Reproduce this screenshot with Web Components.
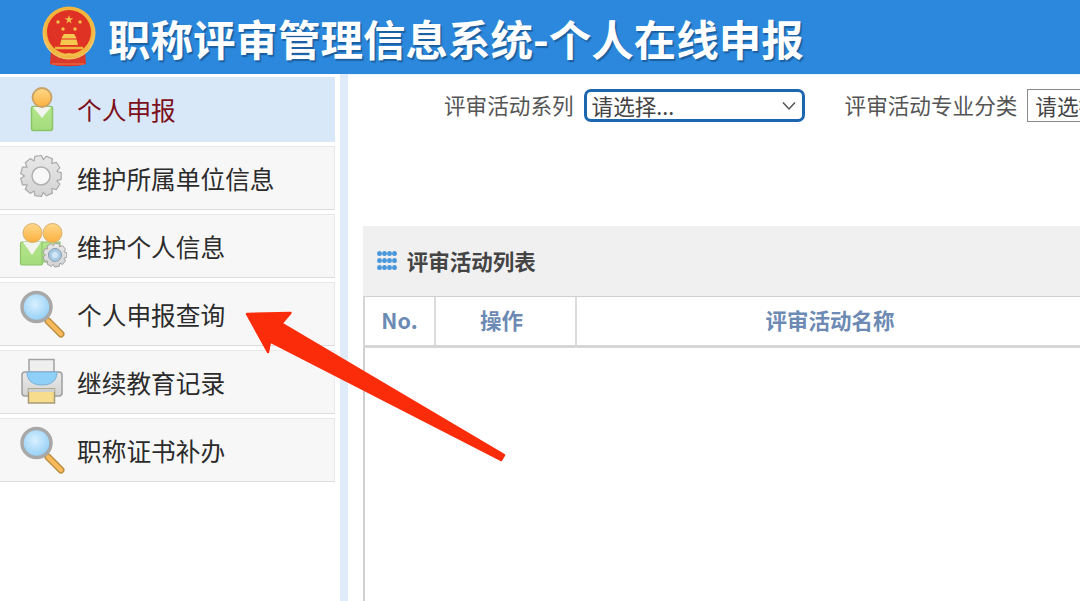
<!DOCTYPE html>
<html lang="zh">
<head>
<meta charset="utf-8">
<title>职称评审管理信息系统</title>
<style>
  html, body { margin: 0; height: 100%; background: #fff; overflow: hidden; }
  body {
    display: flex;
    flex-direction: column;
    height: 601px;
    font-family: "Noto Sans CJK SC", "Liberation Sans", sans-serif;
  }
  .page { display: flex; flex: 1; min-height: 0; }
</style>
</head>
<body>
  <app-header>职称评审管理信息系统-个人在线申报</app-header>
  <div class="page">
    <side-nav>
      <nav-item icon="person" active>个人申报</nav-item>
      <nav-item icon="gear">维护所属单位信息</nav-item>
      <nav-item icon="people">维护个人信息</nav-item>
      <nav-item icon="search">个人申报查询</nav-item>
      <nav-item icon="printer">继续教育记录</nav-item>
      <nav-item icon="search">职称证书补办</nav-item>
    </side-nav>
    <main-area>
      <filter-bar>
        <filter-field label="评审活动系列" focused>请选择...</filter-field>
        <filter-field label="评审活动专业分类">请选择...</filter-field>
      </filter-bar>
      <activity-panel title-text="评审活动列表"></activity-panel>
    </main-area>
  </div>
  <red-arrow></red-arrow>

<script>
// gear outline, centre cx/cy, used by two of the nav icons
function gearPath(cx, cy, outer, inner, teeth) {
  const pts = [];
  const step = Math.PI * 2 / teeth;
  for (let i = 0; i < teeth; i++) {
    const a = i * step;
    const radii = [[inner, -0.5], [outer, -0.28], [outer, 0.28], [inner, 0.5]];
    radii.forEach(([r, k]) => {
      const t = a + k * step;
      pts.push((cx + r * Math.cos(t)).toFixed(1) + ' ' + (cy + r * Math.sin(t)).toFixed(1));
    });
  }
  return 'M' + pts.join('L') + 'Z';
}

const sharedDefs = `
  <defs>
    <linearGradient id="head" x1="0" y1="0" x2="0" y2="1">
      <stop offset="0" stop-color="#ffd98a"/><stop offset="1" stop-color="#fbb03f"/>
    </linearGradient>
    <linearGradient id="body" x1="0" y1="0" x2="0" y2="1">
      <stop offset="0" stop-color="#b4e58c"/><stop offset="1" stop-color="#a4dc7c"/>
    </linearGradient>
    <linearGradient id="steel" x1="0" y1="0" x2="0" y2="1">
      <stop offset="0" stop-color="#e8e8e8"/><stop offset="1" stop-color="#d4d4d4"/>
    </linearGradient>
    <radialGradient id="glass" cx=".45" cy=".4" r=".65">
      <stop offset="0" stop-color="#d8f0ff"/><stop offset="1" stop-color="#8ccbf5"/>
    </radialGradient>
  </defs>`;

// all icons are drawn in a 50x56 box
const icons = {
  person: `
    <rect x="14.500" y="24.500" width="21" height="24" rx="2" fill="url(#body)" stroke="#8cc46a" stroke-width="1.500"/>
    <path d="M16 25h18l-9 11z" fill="#f2f5ee"/>
    <circle cx="25" cy="15.500" r="9.500" fill="url(#head)" stroke="#c9a265" stroke-width="1.800"/>`,
  gear: `
    <path d="${gearPath(24, 26, 20.500, 16.500, 11)}" fill="url(#steel)" stroke="#a9a9a9" stroke-width="1.200" stroke-linejoin="round"/>
    <circle cx="24" cy="26" r="9" fill="#f8f8f8" stroke="#b0b0b0" stroke-width="1.500"/>`,
  people: `
    <rect x="3.500" y="24" width="22" height="23" rx="1.500" fill="url(#body)" stroke="#8cc46a" stroke-width="1.200"/>
    <path d="M6 24h18l-9 13z" fill="#f2f5ee"/>
    <rect x="25" y="24" width="18" height="20" fill="url(#body)" stroke="#8cc46a" stroke-width="1"/>
    <circle cx="15.500" cy="15" r="9.500" fill="url(#head)" stroke="#d9b070" stroke-width="1"/>
    <circle cx="35.500" cy="15" r="9.500" fill="url(#head)" stroke="#d9b070" stroke-width="1"/>
    <path d="${gearPath(38, 37, 12, 9.500, 9)}" fill="url(#steel)" stroke="#a2a2a2" stroke-width="1" stroke-linejoin="round"/>
    <circle cx="38" cy="37" r="6.500" fill="#a9cbe6" stroke="#8b9bab" stroke-width="1"/>
    <circle cx="38" cy="37" r="3" fill="#d5e6f3"/>`,
  search: `
    <path d="M31 35l13 13" stroke="#b98a3c" stroke-width="7" stroke-linecap="round"/>
    <path d="M31 35l13 13" stroke="#f6b95c" stroke-width="4.500" stroke-linecap="round"/>
    <circle cx="19.500" cy="21" r="14.500" fill="url(#glass)" stroke="#a8a8a8" stroke-width="3.500"/>`,
  printer: `
    <path d="M12 5.500h25v16H12z" fill="#efefef" stroke="#a3a3a3" stroke-width="1.500"/>
    <rect x="5" y="18" width="40" height="24" rx="3" fill="url(#steel)" stroke="#9f9f9f" stroke-width="1.500"/>
    <path d="M10 18h30c0 9-6 13-15 13S10 27 10 18z" fill="#8fd0f8" stroke="#7ab1d6" stroke-width="1"/>
    <rect x="11.500" y="35" width="26" height="14" fill="#f7dc8e" stroke="#a69a76" stroke-width="1.500"/>
    <path d="M11.500 35h26v3h-26z" fill="#d0d0d0"/>`
};

class AppHeader extends HTMLElement {
  constructor() {
    super();
    this.attachShadow({ mode: 'open' });
    this.shadowRoot.innerHTML = `
      <style>
        :host {
          display: flex;
          align-items: center;
          flex: none;
          height: 74px;
          padding-left: 40px;
          background: #2b88dc;
          overflow: hidden;
        }
        svg { flex: none; width: 56px; height: 62px; margin-right: 12px; }
        .title {
          padding-top: 3px;
          color: #fff;
          font-size: 42.500px;
          font-weight: 700;
          line-height: 1;
          white-space: nowrap;
          text-shadow: 1.500px 2px 1px #1c5f9f;
        }
      </style>
      <svg viewBox="0 0 56 62">
        <defs>
          <radialGradient id="ring" cx=".5" cy=".45" r=".55">
            <stop offset=".8" stop-color="#f3b53c"/><stop offset="1" stop-color="#f6cf80"/>
          </radialGradient>
        </defs>
        <path d="M11 44h34l1 14c-6 3-30 3-36 0z" fill="#d8392a"/>
        <circle cx="29" cy="27" r="26.500" fill="url(#ring)"/>
        <circle cx="29" cy="26" r="22" fill="#df3224"/>
        <path d="M29 9l1 3.300h3.400l-2.800 2 1 3.300-2.600-2-2.600 2 1-3.300-2.800-2h3.400z" fill="#f3c04a"/>
        <circle cx="18" cy="16" r="1.700" fill="#f3c04a"/>
        <circle cx="23" cy="23" r="1.700" fill="#f3c04a"/>
        <circle cx="35" cy="23" r="1.700" fill="#f3c04a"/>
        <circle cx="40" cy="16" r="1.700" fill="#f3c04a"/>
        <path d="M22 31l2-3h10l2 3 2 8H20z" fill="#f5c94f"/>
        <path d="M20 33h18" stroke="#df3224" stroke-width="1"/>
        <path d="M10 41c5 7 11 10 19 10s14-3 19-10" fill="none" stroke="#efb63e" stroke-width="3.500"/>
        <path d="M15 42h28" stroke="#efb63e" stroke-width="2.500"/>
        <path d="M15 47c4 3 9 3 14 1 5 2 10 2 14-1" fill="none" stroke="#f0bd4a" stroke-width="2"/>
        <path d="M12 58h32" stroke="#e8663c" stroke-width="1.500"/>
      </svg>
      <span class="title"><slot></slot></span>`;
  }
}

class SideNav extends HTMLElement {
  constructor() {
    super();
    this.attachShadow({ mode: 'open' });
    this.shadowRoot.innerHTML = `
      <style>
        :host {
          display: flex;
          flex-direction: column;
          flex: none;
          gap: 4px;
          box-sizing: border-box;
          width: 348px;
          padding: 3px 13px 0 0;
          background: linear-gradient(to right, #fff 340px, #dfebf8 340px);
        }
      </style>
      <slot></slot>`;
  }
}

class NavItem extends HTMLElement {
  constructor() {
    super();
    this.attachShadow({ mode: 'open' });
    const icon = icons[this.getAttribute('icon')] || '';
    this.shadowRoot.innerHTML = `
      <style>
        :host {
          display: flex;
          align-items: center;
          box-sizing: border-box;
          height: 64px;
          padding-left: 17px;
          background: #f7f7f7;
          border: 1px solid #e9e9e9;
          border-left: 0;
          border-bottom-color: #dcdcdc;
          color: #2b2b2b;
          font-size: 24.700px;
          line-height: 1;
          white-space: nowrap;
        }
        :host([active]) {
          height: 65px;
          background: #d9e8f9;
          border-color: #d9e8f9;
          color: #7c0f1a;
        }
        svg { flex: none; width: 50px; height: 56px; margin-right: 10px; }
      </style>
      <svg viewBox="0 0 50 56">${sharedDefs}${icon}</svg>
      <slot></slot>`;
  }
}

class MainArea extends HTMLElement {
  constructor() {
    super();
    this.attachShadow({ mode: 'open' });
    this.shadowRoot.innerHTML = `
      <style>
        :host {
          display: flex;
          flex-direction: column;
          flex: 1;
          min-width: 0;
          overflow: hidden;
          border-top: 1px solid #e6f7fd;
        }
      </style>
      <slot></slot>`;
  }
}

class FilterBar extends HTMLElement {
  constructor() {
    super();
    this.attachShadow({ mode: 'open' });
    this.shadowRoot.innerHTML = `
      <style>
        :host {
          display: flex;
          align-items: flex-start;
          flex: none;
          gap: 40px;
          box-sizing: border-box;
          height: 151px;
          padding: 14px 0 0 96px;
          white-space: nowrap;
        }
      </style>
      <slot></slot>`;
  }
}

class FilterField extends HTMLElement {
  constructor() {
    super();
    this.attachShadow({ mode: 'open' });
    const focused = this.hasAttribute('focused');
    this.shadowRoot.innerHTML = `
      <style>
        :host {
          display: flex;
          align-items: center;
          flex: none;
          gap: 10px;
          height: 33px;
          color: #555;
          font-size: 21.600px;
          line-height: 1;
        }
        .label { padding-bottom: 2px; }
        .select {
          display: flex;
          align-items: center;
          justify-content: space-between;
          box-sizing: border-box;
          width: 221px;
          height: 33px;
          padding: 0 6px 0 7px;
          border: 1px solid #8a8a8a;
          color: #444;
          background: #fff;
        }
        .select.focused { border: 3px solid #1c66b0; border-radius: 7px; padding: 0 5px; }
        svg { width: 16px; height: 10px; flex: none; }
      </style>
      <span class="label">${this.getAttribute('label')}</span>
      <div class="select ${focused ? 'focused' : ''}">
        <span><slot></slot></span>
        <svg viewBox="0 0 16 10"><path d="M2 1.500l6 6.500 6-6.500" fill="none" stroke="#555" stroke-width="1.500"/></svg>
      </div>`;
  }
}

class ActivityPanel extends HTMLElement {
  constructor() {
    super();
    this.attachShadow({ mode: 'open' });
    const dots = Array.from({ length: 12 }, () => '<i></i>').join('');
    this.shadowRoot.innerHTML = `
      <style>
        :host {
          display: flex;
          flex-direction: column;
          flex: 1;
          box-sizing: border-box;
          width: 760px;
          margin-left: 15px;
        }
        .head {
          display: flex;
          align-items: center;
          flex: none;
          gap: 10px;
          box-sizing: border-box;
          height: 70px;
          padding: 0 0 1px 14px;
          background: #f0f0f0;
          color: #444;
          font-size: 21.500px;
          font-weight: 700;
          line-height: 1;
        }
        .dots {
          display: grid;
          grid-template-columns: repeat(4, 4.500px);
          grid-auto-rows: 5px;
          gap: 2px 0.600px;
        }
        .dots i { border-radius: 50%; background: #4a97dc; }
        .cols {
          display: grid;
          grid-template-columns: 71px 141px 1fr;
          flex: none;
          box-sizing: border-box;
          height: 52px;
          border: 2px solid #d6d6d6;
          border-width: 1px 0 3px 2px;
          border-top-color: #cfcfcf;
          color: #6c8ab3;
          font-size: 21.500px;
          font-weight: 700;
          line-height: 1;
        }
        .cols div {
          display: flex;
          align-items: center;
          justify-content: center;
          box-sizing: border-box;
          padding-bottom: 2px;
          border-right: 2px solid #dcdcdc;
        }
        .cols div:nth-child(2) { padding-right: 8px; }
        .cols div:last-child { border-right: 0; padding-right: 40px; }
        .rows { flex: 1; border-left: 2px solid #cfcfcf; }
      </style>
      <div class="head"><span class="dots">${dots}</span><span>${this.getAttribute('title-text')}</span></div>
      <div class="cols"><div>No.</div><div>操作</div><div>评审活动名称</div></div>
      <div class="rows"></div>`;
  }
}

class RedArrow extends HTMLElement {
  constructor() {
    super();
    this.attachShadow({ mode: 'open' });
    this.shadowRoot.innerHTML = `
      <style>
        :host { position: absolute; left: 0; top: 0; width: 1080px; height: 601px; pointer-events: none; }
        svg { display: block; width: 100%; height: 100%; }
      </style>
      <svg viewBox="0 0 1080 601">
        <path d="M247 314L290.500 313L281.500 323.500L504 455L501 460L270 341.500L268 352z"
          fill="#fa2c0a" stroke="#fa2c0a" stroke-width="2.500" stroke-linejoin="round"/>
      </svg>`;
  }
}

customElements.define('app-header', AppHeader);
customElements.define('side-nav', SideNav);
customElements.define('nav-item', NavItem);
customElements.define('main-area', MainArea);
customElements.define('filter-bar', FilterBar);
customElements.define('filter-field', FilterField);
customElements.define('activity-panel', ActivityPanel);
customElements.define('red-arrow', RedArrow);
</script>
</body>
</html>
